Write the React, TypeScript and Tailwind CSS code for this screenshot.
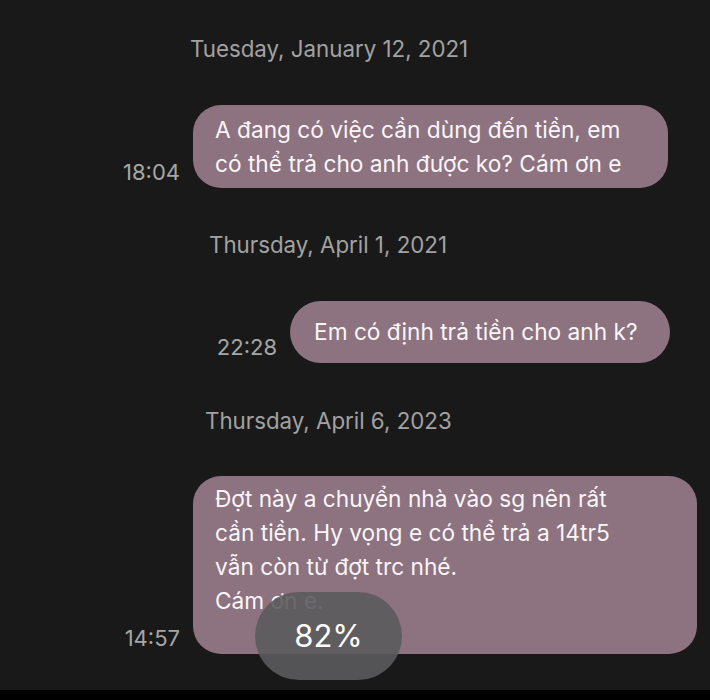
import React from "react";

const font = { fontFamily: "Inter, 'Noto Sans', 'DejaVu Sans', sans-serif" };

function DateLabel({ text, left }: { text: string; left: string }) {
  return <div className={`text-[22.3px] leading-[28px] text-[#a2a2a2] ${left}`}>{text}</div>;
}

function Message({
  time,
  lines,
  bubbleClass,
  rowClass,
}: {
  time: string;
  lines: string[];
  bubbleClass: string;
  rowClass: string;
}) {
  return (
    <div className={`flex items-end justify-end gap-[13px] ${rowClass}`}>
      <span className="mb-[3px] text-[22px] leading-[26px] text-[#a6a6a6]">{time}</span>
      <div className={`bg-[#8d7280] text-[22.7px] leading-[34px] text-[#faf6f8] ${bubbleClass}`}>
        {lines.map((line) => (
          <div key={line}>{line}</div>
        ))}
      </div>
    </div>
  );
}

export default function App() {
  return (
    <div className="flex h-[700px] w-[710px] flex-col bg-[#191919]" style={font}>
      <div className="relative flex-1 overflow-hidden">
        <div className="flex flex-col pt-[35px]">
          <DateLabel text="Tuesday, January 12, 2021" left="pl-[190px]" />
          <Message
            time="18:04"
            rowClass="mt-[42px] pr-[42px]"
            bubbleClass="w-[475px] rounded-[28px] pl-[22px] pt-[8px] pb-[7px]"
            lines={["A đang có việc cần dùng đến tiền, em", "có thể trả cho anh được ko? Cám ơn e"]}
          />
          <div className="mt-[43px]">
            <DateLabel text="Thursday, April 1, 2021" left="pl-[209px]" />
          </div>
          <Message
            time="22:28"
            rowClass="mt-[42px] pr-[40px]"
            bubbleClass="w-[380px] rounded-full pl-[24px] py-[14px]"
            lines={["Em có định trả tiền cho anh k?"]}
          />
          <div className="mt-[44px]">
            <DateLabel text="Thursday, April 6, 2023" left="pl-[205px]" />
          </div>
          <Message
            time="14:57"
            rowClass="mt-[41px] pr-[13px]"
            bubbleClass="w-[504px] rounded-[28px] pl-[22px] pt-[6px] pb-[36px]"
            lines={[
              "Đợt này a chuyển nhà vào sg nên rất",
              "cần tiền. Hy vọng e có thể trả a 14tr5",
              "vẫn còn từ đợt trc nhé.",
              "Cám ơn e.",
            ]}
          />
        </div>
        <div className="absolute left-[255px] top-[592px] flex h-[88px] w-[147px] items-center justify-center rounded-full bg-[#5b5b5d]/90 text-[31px] text-white">
          82%
        </div>
      </div>
      <div className="h-[10px] bg-black" />
    </div>
  );
}
